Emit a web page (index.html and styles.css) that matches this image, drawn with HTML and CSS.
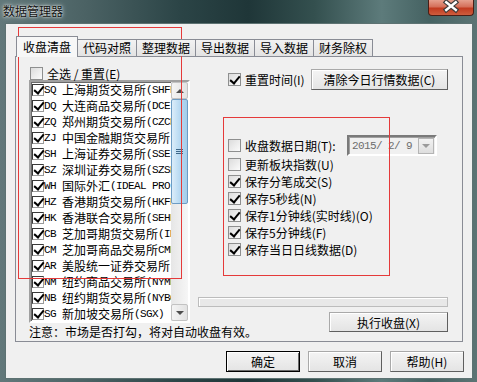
FILE: index.html
```html
<!DOCTYPE html>
<html>
<head>
  <title>数据管理器</title>
  <link rel="stylesheet" href="styles.css">
</head>
<body>
  <div class="window">
    <div class="titlebar">
      <span class="title">数据管理器</span>
      <div class="close">
        <svg width="46" height="15" viewBox="0 0 46 15">
          <path d="M18 2 L28 10 M28 2 L18 10" stroke="#3b3b3b" stroke-width="5" stroke-linecap="square"/>
          <path d="M18 2 L28 10 M28 2 L18 10" stroke="#fff" stroke-width="2.6" stroke-linecap="square"/>
        </svg>
      </div>
    </div>

    <div class="client">
      <div class="tabs">
        <div class="tab active">收盘清盘</div>
        <div class="tab">代码对照</div>
        <div class="tab">整理数据</div>
        <div class="tab">导出数据</div>
        <div class="tab">导入数据</div>
        <div class="tab">财务除权</div>
      </div>

      <div class="panel">
        <div class="left">
          <div class="selall">
            <span class="cb"></span>
            <span class="label">全选 / 重置(E)</span>
          </div>
          <div class="listbox">
            <div class="items">
              <div class="item"><span class="lcb on"></span><span class="code">SQ</span>上海期货交易所<span class="code">(SHFE)</span></div>
              <div class="item"><span class="lcb on"></span><span class="code">DQ</span>大连商品交易所<span class="code">(DCE)</span></div>
              <div class="item"><span class="lcb on"></span><span class="code">ZQ</span>郑州期货交易所<span class="code">(CZCE)</span></div>
              <div class="item"><span class="lcb on"></span><span class="code">ZJ</span>中国金融期货交易所<span class="code">(CFFEX)</span></div>
              <div class="item"><span class="lcb on"></span><span class="code">SH</span>上海证券交易所<span class="code">(SSE)</span></div>
              <div class="item"><span class="lcb on"></span><span class="code">SZ</span>深圳证券交易所<span class="code">(SZSE)</span></div>
              <div class="item"><span class="lcb on"></span><span class="code">WH</span>国际外汇<span class="code">(IDEAL PRO)</span></div>
              <div class="item"><span class="lcb on"></span><span class="code">HZ</span>香港期货交易所<span class="code">(HKFE)</span></div>
              <div class="item"><span class="lcb on"></span><span class="code">HK</span>香港联合交易所<span class="code">(SEHK)</span></div>
              <div class="item"><span class="lcb on"></span><span class="code">CB</span>芝加哥期货交易所<span class="code">(IMM)</span></div>
              <div class="item"><span class="lcb on"></span><span class="code">CM</span>芝加哥商品交易所<span class="code">CME</span></div>
              <div class="item"><span class="lcb on"></span><span class="code">AR</span>美股统一证券交易所</div>
              <div class="item"><span class="lcb on"></span><span class="code">NM</span>纽约商品交易所<span class="code">(NYMEX)</span></div>
              <div class="item"><span class="lcb on"></span><span class="code">NB</span>纽约期货交易所<span class="code">(NYBOT)</span></div>
              <div class="item"><span class="lcb on"></span><span class="code">SG</span>新加坡交易所<span class="code">(SGX)</span></div>
            </div>
            <div class="vscroll">
              <div class="sbtn"><span class="arrow up"></span></div>
              <div class="thumb"><span class="grip"></span></div>
              <div class="track"></div>
              <div class="sbtn"><span class="arrow down"></span></div>
            </div>
          </div>
          <div class="note">注意：市场是否打勾，将对自动收盘有效。</div>
        </div>

        <div class="right">
          <div class="reset-row">
            <span class="cb on"></span>
            <span class="label">重置时间(I)</span>
            <div class="btn clear">清除今日行情数据(C)</div>
          </div>

          <div class="options">
            <div class="opt date-row">
              <span class="cb"></span>
              <span class="label">收盘数据日期(T):</span>
              <div class="datepick">
                <span class="dtext">2015/ 2/ 9</span>
                <span class="ddbtn"><span class="arrow down gray"></span></span>
              </div>
            </div>
            <div class="opt"><span class="cb"></span><span class="label">更新板块指数(U)</span></div>
            <div class="opt"><span class="cb on"></span><span class="label">保存分笔成交(S)</span></div>
            <div class="opt"><span class="cb on"></span><span class="label">保存5秒线(N)</span></div>
            <div class="opt"><span class="cb on"></span><span class="label">保存1分钟线(实时线)(O)</span></div>
            <div class="opt"><span class="cb on"></span><span class="label">保存5分钟线(F)</span></div>
            <div class="opt"><span class="cb on"></span><span class="label">保存当日日线数据(D)</span></div>
          </div>

          <div class="progress"></div>
          <div class="btn exec">执行收盘(X)</div>
        </div>
      </div>

      <div class="buttons">
        <div class="btn default">确定</div>
        <div class="btn">取消</div>
        <div class="btn">帮助(H)</div>
      </div>
    </div>

    <div class="mark mark-list"></div>
    <div class="mark mark-opts"></div>
  </div>
</body>
</html>
```

FILE: styles.css
```css
* {
  box-sizing: border-box;
}

body {
  margin: 0;
  width: 477px;
  height: 382px;
  overflow: hidden;
  font-family: "Noto Sans CJK SC", sans-serif;
  font-size: 12px;
  color: #000;
}

.window {
  position: relative;
  width: 477px;
  height: 382px;
  display: flex;
  flex-direction: column;
  background: linear-gradient(90deg, #62787a 0%, #4b6264 18%, #2b4446 38%, #1f3638 52%, #34504f 66%, #5d7b7b 80%, #456262 90%, #5c7474 100%);
}

/* title bar */
.titlebar {
  height: 23px;
  display: flex;
  justify-content: space-between;
  align-items: flex-start;
}

.title {
  padding: 4px 0 0 3px;
  line-height: 14px;
  font-size: 12px;
  color: #111;
  text-shadow: 0 0 5px rgba(255, 255, 255, 0.9), 0 0 2px rgba(255, 255, 255, 0.9);
}

.close {
  width: 46px;
  height: 16px;
  margin-right: 3px;
  border: 1px solid #4a1e16;
  border-top: none;
  border-radius: 0 0 4px 4px;
  background: linear-gradient(#e6a08e, #d5705a 45%, #c23b20 55%, #cd5d3e);
  display: flex;
  justify-content: center;
}

/* client area */
.client {
  flex: 1;
  margin: 0 4px 3px 5px;
  background: #f0f0f0;
  border: 1px solid #5d7272;
  display: flex;
  flex-direction: column;
}

.tabs {
  margin: 12px 0 0 10px;
  height: 20px;
  display: flex;
  align-items: flex-end;
  position: relative;
  z-index: 1;
}

.tab {
  height: 17px;
  padding: 0 5px;
  line-height: 16px;
  border: 1px solid #898c95;
  border-bottom: none;
  border-right: none;
  background: linear-gradient(#f2f2f2, #e3e3e3);
}

.tab:last-child {
  border-right: 1px solid #898c95;
}

.tab.active {
  height: 21px;
  margin-bottom: -1px;
  padding: 2px 6px 0;
  border-right: 1px solid #898c95;
  background: #f7f7f7;
}

.tab.active + .tab {
  border-left: none;
}

.panel {
  height: 286px;
  margin: 0 9px 0 9px;
  border: 1px solid #898c95;
  display: grid;
  grid-template-columns: 161px 250px;
  column-gap: 8px;
  padding: 10px 0 0 13px;
}

/* checkboxes */
.cb {
  position: relative;
  flex: none;
  width: 13px;
  height: 13px;
  border: 1px solid #8e8f8f;
  background: linear-gradient(135deg, #dcdcdc, #fbfbfb);
}

.cb.on::after,
.lcb.on::after {
  content: "";
  position: absolute;
  left: 3px;
  top: 0px;
  width: 4px;
  height: 8px;
  border: solid #000;
  border-width: 0 2px 2px 0;
  transform: rotate(40deg);
}

.label {
  margin-left: 4px;
  white-space: nowrap;
  line-height: 14px;
}

/* left column */
.selall {
  height: 13px;
  display: flex;
  align-items: center;
  padding-left: 1px;
}

.listbox {
  height: 243px;
  display: flex;
  border: 2px solid;
  border-color: #a0a0a0 #fff #fff #a0a0a0;
  box-shadow: inset 1px 1px #696969;
  background: #fff;
}

.items {
  flex: 1;
  overflow: hidden;
  padding-left: 1px;
}

.item {
  height: 16px;
  display: flex;
  align-items: center;
  white-space: nowrap;
  line-height: 16px;
}

.lcb {
  position: relative;
  flex: none;
  width: 12px;
  height: 12px;
  border: 1px solid #3a3a3a;
  border-right-color: #9a9a9a;
  border-bottom-color: #9a9a9a;
  background: #fff;
}

.lcb.on::after {
  left: 3px;
  top: -1px;
}

.code {
  flex: none;
  font-family: "Liberation Mono", monospace;
  font-size: 11px;
  letter-spacing: -0.6px;
}

.lcb + .code {
  width: 18px;
}

.vscroll {
  width: 17px;
  display: flex;
  flex-direction: column;
  background: linear-gradient(90deg, #e6e6e6, #f6f6f6);
}

.sbtn {
  height: 17px;
  border: 1px solid #c2c2c2;
  border-radius: 2px;
  background: linear-gradient(90deg, #f4f4f4, #e2e2e2);
  display: flex;
  align-items: center;
  justify-content: center;
}

.arrow {
  width: 0;
  height: 0;
  border-left: 4px solid transparent;
  border-right: 4px solid transparent;
}

.arrow.up {
  border-bottom: 4px solid #4d4d4d;
}

.arrow.down {
  border-top: 4px solid #4d4d4d;
}

.arrow.gray {
  border-top-color: #9a9a9a;
}

.thumb {
  height: 105px;
  border: 1px solid #6d9cc4;
  border-radius: 2px;
  background: linear-gradient(90deg, #dcedf9, #b8daf2 50%, #a6cdea);
  display: flex;
  align-items: center;
  justify-content: center;
}

.grip {
  width: 7px;
  height: 5px;
  border-top: 1px solid #3c6788;
  border-bottom: 1px solid #3c6788;
  background: linear-gradient(transparent 1px, #3c6788 1px, #3c6788 2px, transparent 2px);
}

.track {
  flex: 1;
}

.note {
  margin-top: 2px;
  line-height: 14px;
  white-space: nowrap;
}

/* right column */
.right {
  display: flex;
  flex-direction: column;
}

.reset-row {
  margin-top: 2px;
  height: 21px;
  padding-left: 30px;
  display: flex;
  align-items: center;
}

.btn {
  height: 21px;
  border: 1px solid;
  border-color: #a9a9a9 #5f5f5f #5f5f5f #a9a9a9;
  box-shadow: inset 1px 1px #fff;
  background: linear-gradient(#f4f4f4, #e4e4e4);
  display: flex;
  align-items: center;
  justify-content: center;
  white-space: nowrap;
}

.clear {
  width: 137px;
  margin-left: auto;
}

.options {
  margin-top: 45px;
  padding-left: 30px;
}

.opt {
  height: 17px;
  display: flex;
  align-items: center;
}

.date-row {
  height: 21px;
}

.datepick {
  margin: 0 11px 0 auto;
  width: 90px;
  height: 21px;
  border: 2px solid;
  border-color: #7a7a7a #fff #fff #7a7a7a;
  box-shadow: inset 1px 1px #a0a0a0;
  background: #f0f0f0;
  display: flex;
  align-items: center;
}

.dtext {
  flex: 1;
  padding-left: 3px;
  color: #6d6d6d;
  font-family: "Liberation Mono", monospace;
  font-size: 11px;
  letter-spacing: -0.6px;
}

.ddbtn {
  width: 16px;
  height: 16px;
  margin-right: 1px;
  border: 1px solid #b5b5b5;
  background: linear-gradient(#f2f2f2, #dedede);
  display: flex;
  align-items: center;
  justify-content: center;
}

.progress {
  margin-top: 39px;
  height: 10px;
  border: 1px solid #bcbcbc;
  background: #e8e8e8;
  box-shadow: inset 1px 1px #fff;
}

.exec {
  align-self: flex-end;
  width: 119px;
  height: 20px;
  margin-top: 5px;
}

/* dialog buttons */
.buttons {
  margin-top: 9px;
  padding-right: 8px;
  display: flex;
  justify-content: flex-end;
  gap: 8px;
}

.buttons .btn {
  width: 74px;
}

.btn.default {
  border-color: #000;
  box-shadow: inset 1px 1px #fff, inset -1px -1px #6a6a6a;
}

/* red annotation frames */
.mark {
  position: absolute;
  border: 1px solid #e53a3a;
  pointer-events: none;
}

.mark-list {
  left: 18px;
  top: 27px;
  width: 164px;
  height: 252px;
}

.mark-opts {
  left: 223px;
  top: 117px;
  width: 167px;
  height: 159px;
}
```
